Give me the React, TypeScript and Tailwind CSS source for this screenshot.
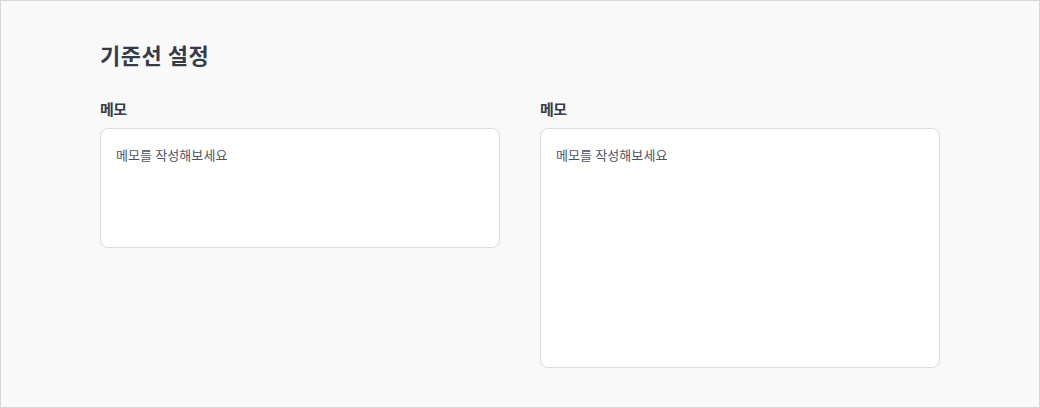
import React from "react";

export default function App() {
  const font = { fontFamily: '"Noto Sans CJK KR", "Noto Sans", sans-serif' };
  return (
    <div
      className="w-[1040px] h-[408px] border border-[#d6d6d6] bg-[#f9f9f9] px-[99px] pt-[37px] text-[#353c49]"
      style={font}
    >
      <h1 className="text-[22px] leading-[32px] font-bold tracking-[0.5px]">기준선 설정</h1>
      <div className="mt-[27px] flex gap-[40px] items-start">
        <div className="w-[400px] flex flex-col">
          <label className="text-[15px] leading-[24px] font-semibold tracking-[-0.6px] mb-[7px]">메모</label>
          <textarea
            className="h-[120px] w-full resize-none rounded-[8px] border border-[#dcdcdf] bg-white px-[15px] py-[16px] text-[13px] leading-[20px] tracking-[0.1px] text-[#4b5563] placeholder:text-[#4f5563] outline-none"
            style={font}
            placeholder="메모를 작성해보세요"
          />
        </div>
        <div className="w-[400px] flex flex-col">
          <label className="text-[15px] leading-[24px] font-semibold tracking-[-0.6px] mb-[7px]">메모</label>
          <textarea
            className="h-[240px] w-full resize-none rounded-[8px] border border-[#dcdcdf] bg-white px-[15px] py-[16px] text-[13px] leading-[20px] tracking-[0.1px] text-[#4b5563] placeholder:text-[#4f5563] outline-none"
            style={font}
            placeholder="메모를 작성해보세요"
          />
        </div>
      </div>
    </div>
  );
}
